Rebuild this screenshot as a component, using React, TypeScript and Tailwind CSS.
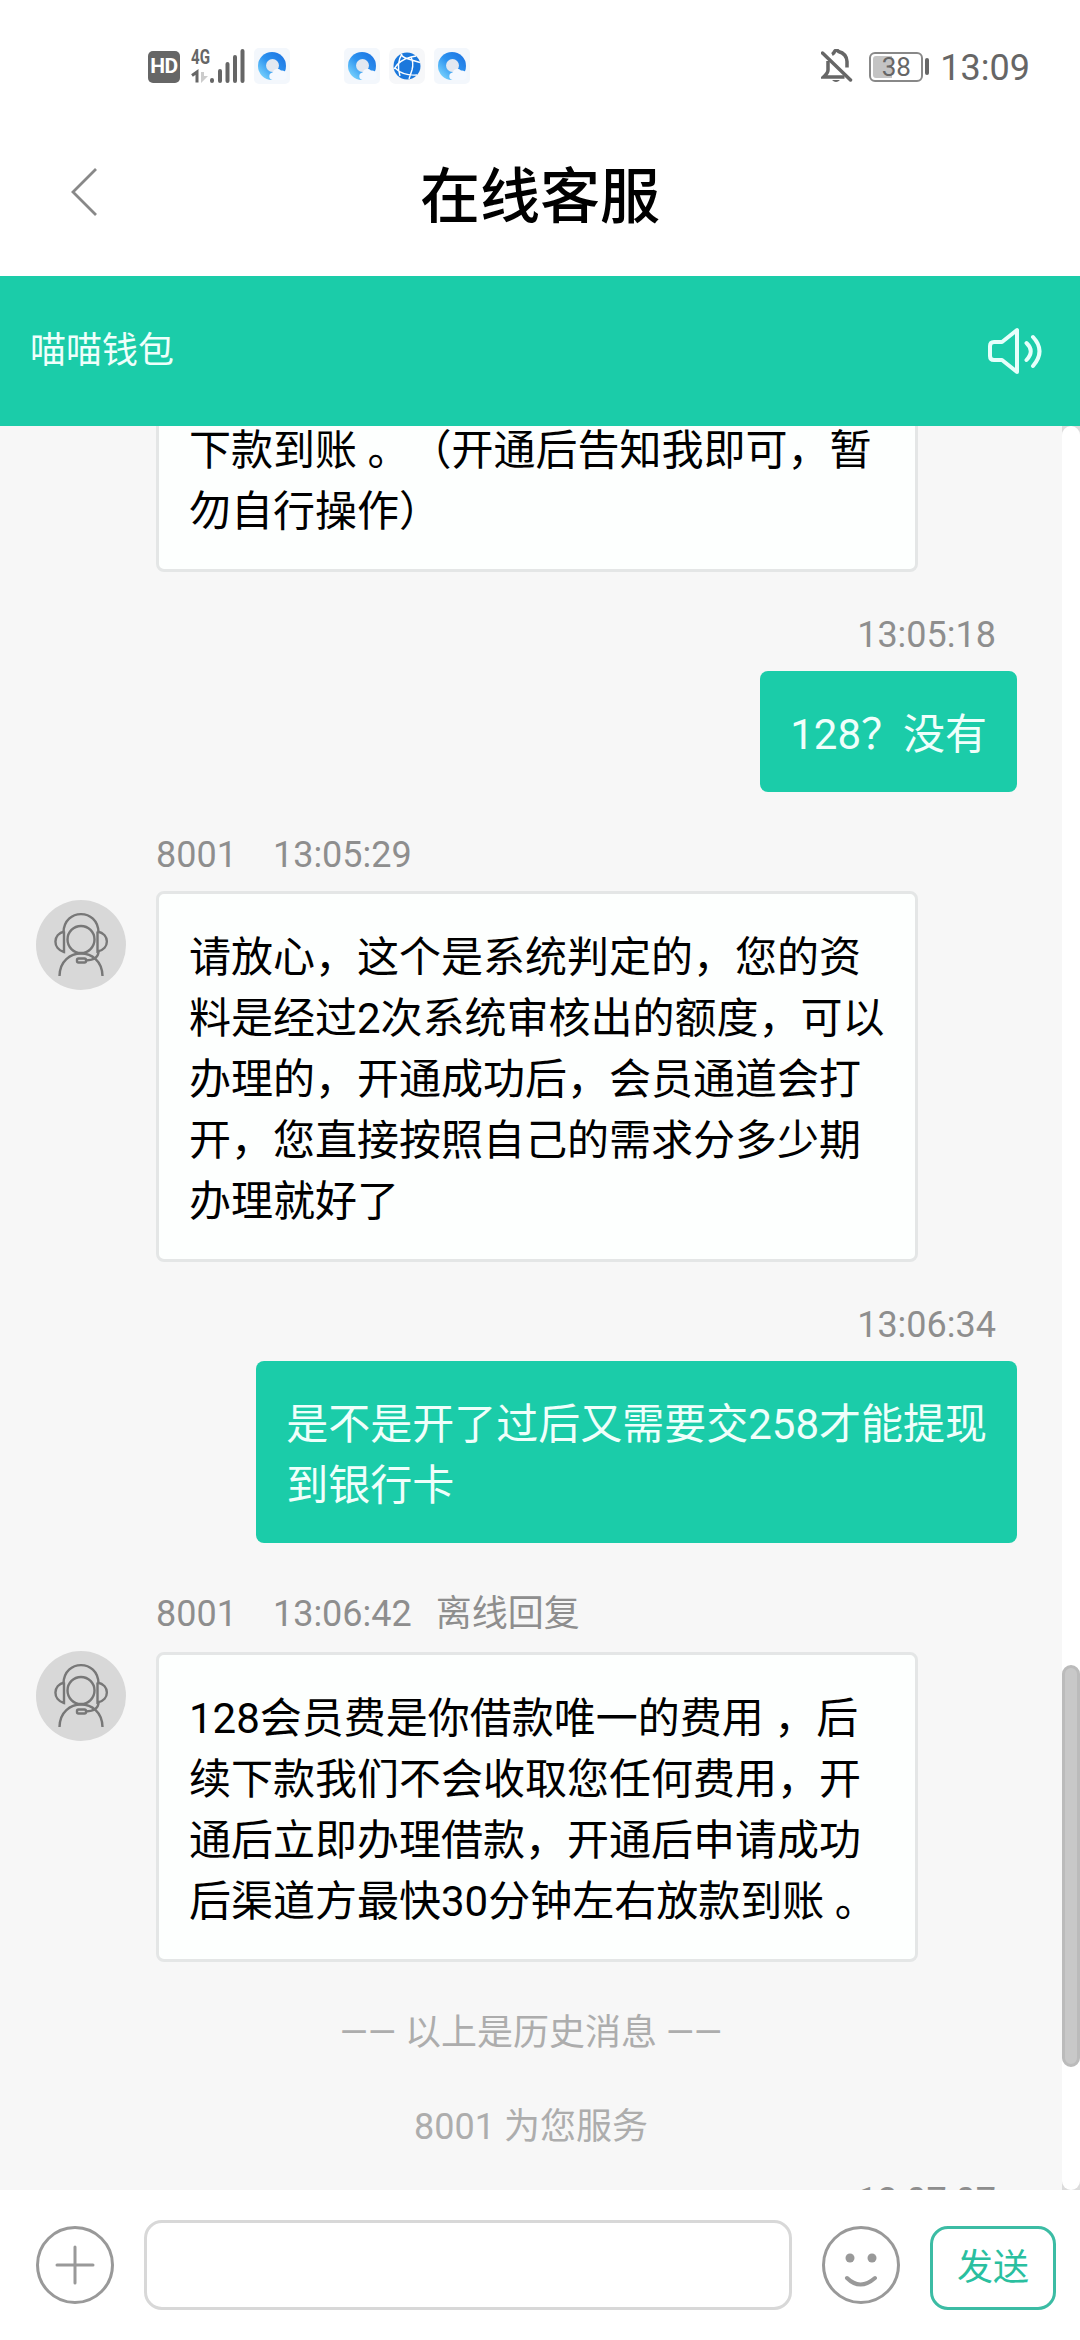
import React from "react";

interface Message {
  from: "agent" | "user";
  time: string;
  text: string;
  note?: string;
}

const messages: Message[] = [
  { from: "user", time: "13:05:18", text: "128？没有" },
  {
    from: "agent",
    time: "13:05:29",
    text: "请放心，这个是系统判定的，您的资\n料是经过2次系统审核出的额度，可以\n办理的，开通成功后，会员通道会打\n开，您直接按照自己的需求分多少期\n办理就好了",
  },
  {
    from: "user",
    time: "13:06:34",
    text: "是不是开了过后又需要交258才能提现\n到银行卡",
  },
  {
    from: "agent",
    time: "13:06:42",
    note: "离线回复",
    text: "128会员费是你借款唯一的费用 ，后\n续下款我们不会收取您任何费用，开\n通后立即办理借款，开通后申请成功\n后渠道方最快30分钟左右放款到账 。",
  },
];

const CloudIcon: React.FC<{ id: string }> = ({ id }) => (
  <svg width="36" height="36" viewBox="0 0 36 36">
    <defs>
      <linearGradient id={id} x1="0" y1="1" x2="1" y2="0">
        <stop offset="0.1" stopColor="#7ad4fd" />
        <stop offset="0.5" stopColor="#2c93f0" />
        <stop offset="1" stopColor="#1a6fe0" />
      </linearGradient>
    </defs>
    <rect width="36" height="36" rx="5" fill="#f3f7fc" />
    <circle cx="18" cy="18" r="14" fill={`url(#${id})`} />
    <circle cx="18.500" cy="17.500" r="6.500" fill="#e3e8f0" />
    <path
      d="M18.500 32a3.800 3.800 0 0 1 0-7.500a5 5 0 0 1 8.500-2a4.800 4.800 0 0 1 2 9.500z"
      fill="#f5f9ff"
    />
  </svg>
);

const GlobeIcon = () => (
  <svg width="36" height="36" viewBox="0 0 36 36">
    <rect width="36" height="36" rx="7" fill="#f6f7f9" />
    <circle cx="18" cy="18" r="13.500" fill="#1b78dc" />
    <path
      d="M12 6q1 3 6 4.500q6 2 13 4M5 21q5-9 17-12l5-1M6 20q8 8 22 7M22 9q3 6 1 13l-3 9M13 6q-6 9-2 22"
      fill="none"
      stroke="#fff"
      strokeWidth="1.400"
    />
  </svg>
);

const StatusBar = () => (
  <div className="flex h-[132px] items-center justify-between pl-[148px] pr-[50px] text-[#666]">
    <div className="flex items-center">
      <div className="mt-px flex h-8 w-8 items-center justify-center rounded-[5px] bg-[#666] text-[21px] font-bold tracking-[-0.5px] text-white">
        HD
      </div>
      <svg width="54" height="36" viewBox="0 -2 54 36" className="ml-[11px] overflow-visible">
        <text x="0" y="14" fontSize="20" fontWeight="700" fill="#666" textLength="19" lengthAdjust="spacingAndGlyphs">
          4G
        </text>
        <path d="M1 25.500l5-3.500v10.500" fill="none" stroke="#666" strokeWidth="3" />
        <path d="M10 22v11l7-7h-4v-4z" fill="#ccc" />
        <path
          d="M21 30v1M29 21v10M36.500 14v17M44 7v24M51.500 1v30"
          stroke="#666"
          strokeWidth="4"
          strokeLinecap="round"
        />
      </svg>
      <div className="ml-[9px] flex">
        <CloudIcon id="cloudA" />
      </div>
      <div className="ml-[54px] flex gap-[9px]">
        <CloudIcon id="cloudB" />
        <GlobeIcon />
        <CloudIcon id="cloudC" />
      </div>
    </div>
    <div className="flex items-center">
      <svg width="32" height="34" viewBox="0 0 32 34">
        <path
          d="M7 12v9q0 3-4.500 7h21M11 5.500q2-1 2.500-3q2-2.500 4 0q8 2 8.500 10v6"
          fill="none"
          stroke="#666"
          strokeWidth="3.500"
        />
        <path d="M1.500 4l28 27" stroke="#666" strokeWidth="3.500" strokeLinecap="round" />
        <path d="M11 31h8q-4 4-8 0z" fill="#666" />
      </svg>
      <div className="relative ml-[16px] mt-px flex h-[30px] w-[54px] items-center justify-center rounded-[6px] border-2 border-[#888] text-[26px] leading-none">
        <div className="absolute left-[2px] top-[2px] h-[22px] w-[19px] rounded-l-[3px] bg-[#c4c4c4]" />
        <span className="relative">38</span>
      </div>
      <div className="ml-[2px] h-[17px] w-1 rounded-sm bg-[#666]" />
      <span className="ml-[11px] mt-[4px] text-[36px] leading-none">13:09</span>
    </div>
  </div>
);

const Avatar = () => (
  <div className="h-[90px] w-[90px] shrink-0 rounded-full bg-[#d8d8d8]">
    <svg width="90" height="90" viewBox="0 0 90 90" fill="none" stroke="#777" strokeWidth="2.400">
      <circle cx="45" cy="39.500" r="13.500" />
      <path d="M27.500 32.500C28 8 62 8 62.500 32.500" />
      <path d="M28.500 31.500C16.500 34 16.500 49 28 52V31.500M61.500 31.500C74 34 74 49 61.500 51.500V31.500" />
      <path d="M23.500 76C24 46 66 46 66.500 76" />
      <path d="M62.500 52Q62 60 50 60.500" />
      <rect x="41" y="58.500" width="9" height="4" rx="1.500" />
    </svg>
  </div>
);

const AgentBubble: React.FC<{ text: string }> = ({ text }) => (
  <div className="w-[762px] whitespace-pre rounded-[8px] border-3 border-[#e4e6e6] bg-[#fdfffe] px-[30px] pb-[27px] pt-[33px] text-[42px] leading-[61px] text-black">
    {text}
  </div>
);

const MessageRow: React.FC<{ message: Message }> = ({ message }) => {
  if (message.from === "user") {
    return (
      <div className="flex flex-col items-end pr-[45px] pt-[37px]">
        <p className="pr-[21px] text-[36px] leading-[52px] text-[#8e8e8e]">{message.time}</p>
        <div className="mt-[10px] whitespace-pre rounded-[8px] bg-[#1bcca9] px-[30px] pb-[27px] pt-[33px] text-[42px] leading-[61px] text-[#effffb]">
          {message.text}
        </div>
      </div>
    );
  }
  return (
    <div className="flex items-start gap-[30px] pl-9 pt-9">
      <div className="pt-[72px]">
        <Avatar />
      </div>
      <div className={message.note ? "pt-[9px]" : "pt-px"}>
        <p className="flex text-[36px] leading-[52px] text-[#8e8e8e]">
          <span>8001</span>
          <span className="ml-[36px]">{message.time}</span>
          {message.note && <span className="ml-[24px]">{message.note}</span>}
        </p>
        <div className={message.note ? "mt-[12px]" : "mt-[10px]"}>
          <AgentBubble text={message.text} />
        </div>
      </div>
    </div>
  );
};

const InputBar = () => (
  <div className="flex h-[150px] items-start bg-white pl-9 pt-[30px]">
    <button className="mt-[6px]">
      <svg width="78" height="78" viewBox="0 0 78 78" fill="none" stroke="#999" strokeWidth="3" strokeLinecap="round">
        <circle cx="39" cy="39" r="37.500" />
        <path d="M39 21v36M21 39h36" />
      </svg>
    </button>
    <input className="ml-[30px] h-[90px] w-[648px] rounded-[18px] border-3 border-[#d8d8d8] bg-white" />
    <button className="ml-[30px] mt-[6px]">
      <svg width="78" height="78" viewBox="0 0 78 78" fill="none" stroke="#999" strokeWidth="3">
        <circle cx="39" cy="39" r="37.500" />
        <circle cx="28" cy="32" r="4.500" fill="#999" stroke="none" />
        <circle cx="50" cy="32" r="4.500" fill="#999" stroke="none" />
        <path d="M25 52q13 13 28 0" strokeWidth="4" strokeLinecap="round" />
      </svg>
    </button>
    <button className="ml-[30px] mt-[6px] h-[84px] w-[126px] rounded-[18px] border-3 border-[#3cbca4] text-[36px] leading-[78px] text-[#2abf9f]">
      发送
    </button>
  </div>
);

export default function App() {
  return (
    <div className="flex h-[2340px] w-[1080px] flex-col overflow-hidden bg-white font-[Roboto,'Noto_Sans_CJK_SC',sans-serif] [text-spacing-trim:space-all]">
      <StatusBar />
      <header className="grid h-36 grid-cols-[1fr_auto_1fr] items-start">
        <svg width="28" height="50" viewBox="0 0 28 50" className="ml-[70px] mt-[35px]">
          <path d="M26 2L3 25l23 23" fill="none" stroke="#888" strokeWidth="2.800" />
        </svg>
        <h1 className="mt-[24px] text-[60px] font-medium leading-[84px] text-black">在线客服</h1>
      </header>
      <div className="flex h-[150px] shrink-0 items-center justify-between bg-[#1bcca9] pl-[30px] pr-[38px]">
        <span className="text-[36px] text-[#effffb]">喵喵钱包</span>
        <svg width="54" height="48" viewBox="0 0 54 48" fill="none" stroke="#e6fffb" strokeWidth="4" strokeLinecap="round" strokeLinejoin="round">
          <path d="M2 19q0-4 4-4h8L29 3v42L14 33H6q-4 0-4-4z" />
          <path d="M38.500 16q8.500 8 0 17M45 10q13 14 0 29" />
        </svg>
      </div>
      <div className="flex h-[1764px] shrink-0 overflow-hidden">
        <div className="flex w-[1062px] flex-col bg-[#f7f7f7]">
          {/* end of an earlier message, scrolled under the title */}
          <div className="flex h-[146px] shrink-0 flex-col justify-end overflow-hidden pl-[156px]">
            <AgentBubble text={"下款到账 。（开通后告知我即可，暂\n勿自行操作）"} />
          </div>
          {messages.map((message) => (
            <MessageRow key={message.time} message={message} />
          ))}
          <p className="mt-[45px] text-center text-[36px] leading-[52px] text-[#adadad]">—— 以上是历史消息 ——</p>
          <p className="mt-[42px] text-center text-[36px] leading-[52px] text-[#adadad]">8001 为您服务</p>
          <p className="mt-[22px] pr-[66px] text-right text-[36px] leading-[52px] text-[#8e8e8e]">13:07:07</p>
        </div>
        <div className="w-[18px] bg-[#dcdcdc]">
          <div className="h-full rounded-[9px] bg-white pt-[1239px]">
            <div className="h-[402px] rounded-[9px] border-3 border-[#bbb] bg-[#c8c8c8]" />
          </div>
        </div>
      </div>
      <InputBar />
    </div>
  );
}
